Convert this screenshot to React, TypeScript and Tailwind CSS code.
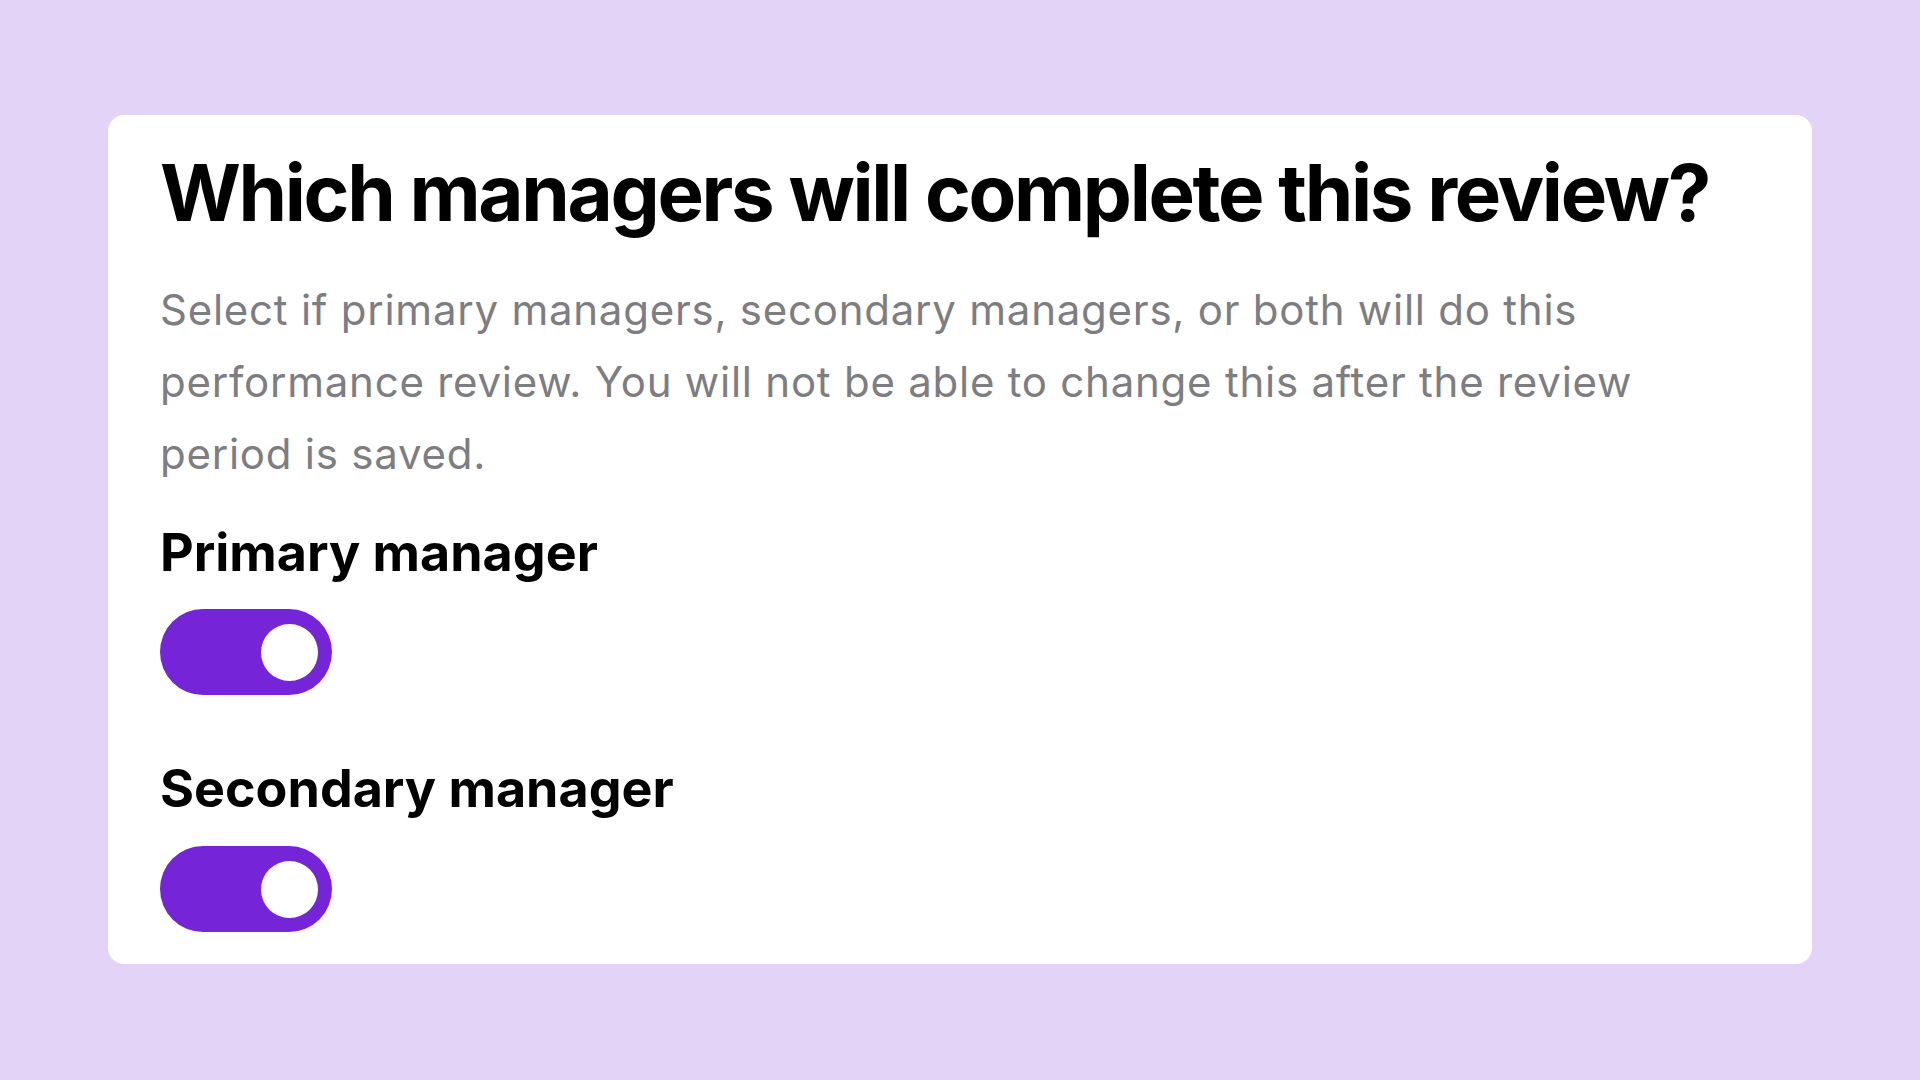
import { useState } from "react";

const Toggle = ({ on, onChange }: { on: boolean; onChange: () => void }) => (
  <button
    type="button"
    role="switch"
    aria-checked={on}
    onClick={onChange}
    className={`flex h-[86px] w-[172px] items-center rounded-full px-[14px] ${
      on ? "justify-end bg-[#7524d8]" : "justify-start bg-[#d4d4d8]"
    }`}
  >
    <span className="block h-[57px] w-[57px] rounded-full bg-white" />
  </button>
);

export default function App() {
  const [primary, setPrimary] = useState(true);
  const [secondary, setSecondary] = useState(true);

  return (
    <div className="min-h-screen bg-[#e3d3f7] px-[108px] pt-[115px] font-['Inter',sans-serif]">
      <div className="flex flex-col rounded-2xl bg-white px-[52px] pt-[31px] pb-[32px]">
        <h1 className="text-[78px] font-bold leading-[1.21] tracking-[-0.03em] text-black">
          Which managers will complete this review?
        </h1>

        <p className="mt-[34px] text-[42px] leading-[72px] tracking-[0.018em] text-[#7d7d82]">
          Select if primary managers, secondary managers, or both will do this
          <br />
          performance review. You will not be able to change this after the review
          <br />
          period is saved.
        </p>

        <p className="mt-[32px] text-[52px] font-bold leading-[1.21] text-black">
          Primary manager
        </p>
        <div className="mt-[24px]">
          <Toggle on={primary} onChange={() => setPrimary(!primary)} />
        </div>

        <p className="mt-[63px] text-[52px] font-bold leading-[1.21] text-black">
          Secondary manager
        </p>
        <div className="mt-[25px]">
          <Toggle on={secondary} onChange={() => setSecondary(!secondary)} />
        </div>
      </div>
    </div>
  );
}
